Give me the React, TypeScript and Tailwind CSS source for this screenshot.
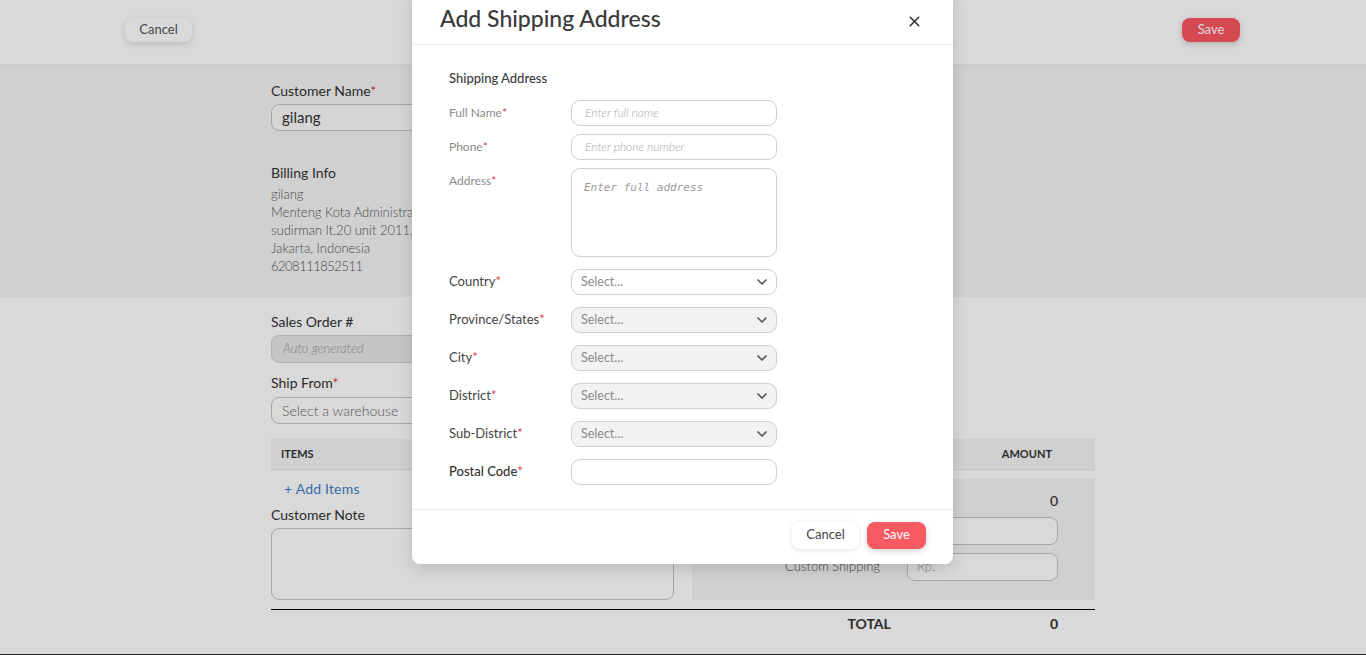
import React from "react";
import { ChevronDown, X } from "lucide-react";

const Req = () => <span className="text-[#e0424f]">*</span>;

function TextRow({ label, placeholder }: { label: string; placeholder: string }) {
  return (
    <div className="flex">
      <div className="w-[122px] h-[26px] flex items-center text-[12px] text-[#8a8a8a]">
        {label}
        <Req />
      </div>
      <div className="w-[206px] h-[26px] rounded-[9px] border border-[#cfcfcf] bg-white flex items-center px-[13px] text-[12px] italic font-light text-[#a8a8a8]">
        {placeholder}
      </div>
    </div>
  );
}

function SelectRow({ label, disabled }: { label: string; disabled?: boolean }) {
  return (
    <div className="flex">
      <div className="w-[122px] h-[26px] flex items-center text-[13px] text-[#444]">
        {label}
        <Req />
      </div>
      <div
        className={
          "w-[206px] h-[26px] rounded-[9px] border border-[#cfcfcf] flex items-center justify-between pl-[9px] pr-[6px] text-[12.5px] text-[#8a8a8a] " +
          (disabled ? "bg-[#f2f2f2]" : "bg-white")
        }
      >
        <span>Select...</span>
        <ChevronDown size={16} strokeWidth={2.5} className="text-[#555]" />
      </div>
    </div>
  );
}

export default function App() {
  return (
    <div className="relative w-[1366px] h-[655px] overflow-hidden bg-white font-['Lato',sans-serif] text-[#333]">
      {/* Background page */}
      <div className="flex flex-col h-full">
        <div className="h-[65px] shrink-0 border-b border-[#eeeeee] flex items-center justify-between pl-[125px] pr-[126px] pb-[5px]">
          <div className="h-[24px] w-[67px] rounded-[8px] bg-white shadow-[0_2px_6px_rgba(0,0,0,0.15)] flex items-center justify-center text-[13px] text-[#555]">
            Cancel
          </div>
          <div className="h-[24px] w-[58px] rounded-[8px] bg-[#fb5661] shadow-[0_2px_6px_rgba(0,0,0,0.2)] flex items-center justify-center text-[13px] text-white">
            Save
          </div>
        </div>

        <div className="h-[232px] shrink-0 bg-[#f5f5f5] pl-[271px] pt-[17px]">
          <div className="text-[14px] leading-[18px] text-[#333]">
            Customer Name<Req />
          </div>
          <div className="mt-[4px] w-[400px] h-[27px] rounded-[8px] border border-[#c4c4c4] bg-[#fbfbfb] flex items-center px-[10px] text-[15px] text-[#333]">
            gilang
          </div>
          <div className="mt-[33px] text-[14px] leading-[18px] text-[#333]">Billing Info</div>
          <div className="mt-[3px] text-[13px] leading-[18px] font-light text-[#555]">
            <div>gilang</div>
            <div>Menteng Kota Administrasi Jakarta Pusat</div>
            <div>sudirman lt.20 unit 2011, Tanah Abang</div>
            <div>Jakarta, Indonesia</div>
            <div className="tracking-[-0.5px]">6208111852511</div>
          </div>
        </div>

        <div className="flex-1 pl-[271px] pt-[16px]">
          <div className="w-[824px]">
            <div className="text-[14px] leading-[18px] text-[#333]">Sales Order #</div>
            <div className="mt-[4px] w-[400px] h-[28px] rounded-[8px] border border-[#cfcfcf] bg-[#e8e8e8] flex items-center px-[11px] text-[13px] italic font-light text-[#999]">
              Auto generated
            </div>
            <div className="mt-[11px] text-[14px] leading-[18px] text-[#333]">
              Ship From<Req />
            </div>
            <div className="mt-[5px] w-[400px] h-[27px] rounded-[8px] border border-[#c4c4c4] bg-white flex items-center px-[10px] text-[14px] font-light text-[#666]">
              Select a warehouse
            </div>
            <div className="mt-[15px] h-[31px] bg-[#f5f5f5] border-b border-[#e6e6e6] flex items-center justify-between pl-[10px] pr-[43px] text-[11px] font-bold text-[#333]">
              <span>ITEMS</span>
              <span>AMOUNT</span>
            </div>
            <div className="mt-[9px] flex gap-[18px]">
              <div className="w-[403px]">
                <div className="pl-[13px] mt-[1px] text-[14px] leading-[18px] text-[#3f7fc4] tracking-[0.2px]">+ Add Items</div>
                <div className="mt-[8px] text-[14px] leading-[18px] text-[#333]">Customer Note</div>
                <div className="mt-[4px] h-[72px] rounded-[8px] border border-[#c4c4c4] bg-white" />
              </div>
              <div className="w-[403px] h-[121px] bg-[#f5f5f5] pt-[13px] pr-[37px] flex flex-col items-end">
                <div className="text-[14px] leading-[18px] font-medium text-[#333]">0</div>
                <div className="mt-[7px] w-[151px] h-[28px] rounded-[8px] border border-[#c4c4c4] bg-white" />
                <div className="mt-[8px] flex items-center gap-[27px]">
                  <span className="text-[13px] font-light text-[#555]">Custom Shipping</span>
                  <div className="w-[151px] h-[28px] rounded-[8px] border border-[#c4c4c4] bg-white flex items-center px-[9px] text-[13px] font-light text-[#999]">
                    Rp.
                  </div>
                </div>
              </div>
            </div>
            <div className="mt-[9px] h-[1px] bg-black" />
            <div className="flex justify-end pr-[37px] pt-[5px] text-[14px] leading-[18px] font-bold text-[#333]">
              <span className="mr-[159px]">TOTAL</span>
              <span>0</span>
            </div>
          </div>
        </div>
        <div className="h-[1px] shrink-0 bg-[#2b2b2b]" />
      </div>

      {/* Overlay */}
      <div className="absolute inset-0 bg-black/[0.15]" />

      {/* Modal */}
      <div className="absolute left-[412px] top-[-8px] w-[541px] rounded-[8px] bg-white shadow-[0_4px_16px_rgba(0,0,0,0.15)]">
        <div className="h-[53px] border-b border-[#ececec] flex items-center justify-between pl-[28px] pr-[30px]">
          <span className="text-[23px] font-medium text-[#3a3a3a] pt-[1px]">Add Shipping Address</span>
          <X size={17} strokeWidth={2.2} className="text-[#333] mt-[6px]" />
        </div>
        <div className="pl-[37px] pt-[25px] pb-[24px]">
          <div className="text-[13px] leading-[16px] font-medium text-[#3a3a3a]">Shipping Address</div>
          <div className="mt-[14px] flex flex-col gap-[8px]">
            <TextRow label="Full Name" placeholder="Enter full name" />
            <TextRow label="Phone" placeholder="Enter phone number" />
            <div className="flex">
              <div className="w-[122px] h-[26px] flex items-center text-[12px] text-[#8a8a8a]">
                Address
                <Req />
              </div>
              <div className="w-[206px] h-[89px] rounded-[9px] border border-[#cfcfcf] bg-white px-[12px] pt-[11px] font-['DejaVu_Sans_Mono',monospace] italic text-[11px] text-[#999]">
                Enter full address
              </div>
            </div>
          </div>
          <div className="mt-[12px] flex flex-col gap-[12px]">
            <SelectRow label="Country" />
            <SelectRow label="Province/States" disabled />
            <SelectRow label="City" disabled />
            <SelectRow label="District" disabled />
            <SelectRow label="Sub-District" disabled />
            <div className="flex">
              <div className="w-[122px] h-[26px] flex items-center text-[13px] font-medium text-[#333]">
                Postal Code
                <Req />
              </div>
              <div className="w-[206px] h-[26px] rounded-[9px] border border-[#cfcfcf] bg-white" />
            </div>
          </div>
        </div>
        <div className="h-[55px] border-t border-[#ececec] flex items-center justify-end gap-[8px] pr-[27px] pb-[4px]">
          <div className="h-[27px] w-[67px] rounded-[8px] bg-white shadow-[0_1px_5px_rgba(0,0,0,0.12)] flex items-center justify-center text-[13px] text-[#444]">
            Cancel
          </div>
          <div className="h-[27px] w-[59px] rounded-[8px] bg-[#f85a64] shadow-[0_2px_6px_rgba(0,0,0,0.18)] flex items-center justify-center text-[13px] text-white">
            Save
          </div>
        </div>
      </div>
    </div>
  );
}
